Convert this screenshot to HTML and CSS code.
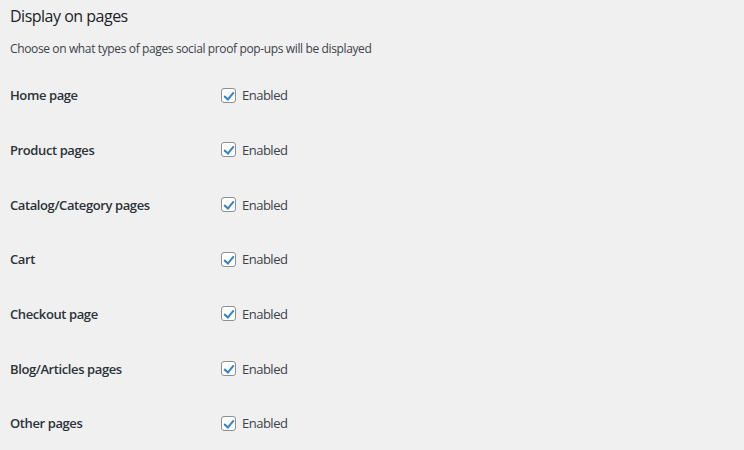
FILE: index.html
```html
<!DOCTYPE html>
<html>
<head>
    <title>Display on pages</title>
    <link rel="stylesheet" href="styles.css">
</head>
<body>
    <div class="wrap">
        <h2>Display on pages</h2>
        <p class="description">Choose on what types of pages social proof pop-ups will be displayed</p>

        <table class="form-table">
            <tr>
                <th>Home page</th>
                <td><label><input type="checkbox" checked> Enabled</label></td>
            </tr>
            <tr>
                <th>Product pages</th>
                <td><label><input type="checkbox" checked> Enabled</label></td>
            </tr>
            <tr>
                <th>Catalog/Category pages</th>
                <td><label><input type="checkbox" checked> Enabled</label></td>
            </tr>
            <tr>
                <th>Cart</th>
                <td><label><input type="checkbox" checked> Enabled</label></td>
            </tr>
            <tr>
                <th>Checkout page</th>
                <td><label><input type="checkbox" checked> Enabled</label></td>
            </tr>
            <tr>
                <th>Blog/Articles pages</th>
                <td><label><input type="checkbox" checked> Enabled</label></td>
            </tr>
            <tr>
                <th>Other pages</th>
                <td><label><input type="checkbox" checked> Enabled</label></td>
            </tr>
        </table>
    </div>
</body>
</html>
```

FILE: styles.css
```css
body {
    margin: 0;
    background: #f0f0f1;
    color: #1d2327;
    font-family: "Open Sans", "Noto Sans", sans-serif;
    font-size: 13px;
}

.wrap {
    padding: 0 10px;
}

h2 {
    font-size: 16px;
    font-weight: 400;
    letter-spacing: -0.5px;
    margin: 0;
    padding-top: 5px;
    line-height: 22px;
}

.description {
    margin: 0;
    padding-top: 13px;
    line-height: 18px;
    font-size: 12px;
    letter-spacing: -0.37px;
    color: #3c434a;
}

/* Settings rows */
.form-table {
    border-collapse: collapse;
    margin-top: 10px;
}

.form-table th {
    width: 200px;
    padding: 0;
    height: 54.67px;
    text-align: left;
    font-size: 13px;
    font-weight: 600;
    letter-spacing: -0.4px;
    color: #2c3338;
    vertical-align: middle;
}

.form-table td {
    padding: 0 0 0 11px;
    vertical-align: middle;
    font-size: 13px;
    letter-spacing: -0.5px;
    color: #3c434a;
}

.form-table label {
    display: flex;
    align-items: center;
    gap: 6px;
}

input[type="checkbox"] {
    appearance: none;
    margin: 0;
    width: 15px;
    height: 15px;
    border: 1px solid #8c8f94;
    border-radius: 3px;
    background: #fff;
    position: relative;
}

input[type="checkbox"]:checked::before {
    content: "";
    position: absolute;
    left: 4px;
    top: 1px;
    width: 4px;
    height: 8px;
    border: solid #3582c4;
    border-width: 0 2px 2px 0;
    transform: rotate(40deg);
}
```
